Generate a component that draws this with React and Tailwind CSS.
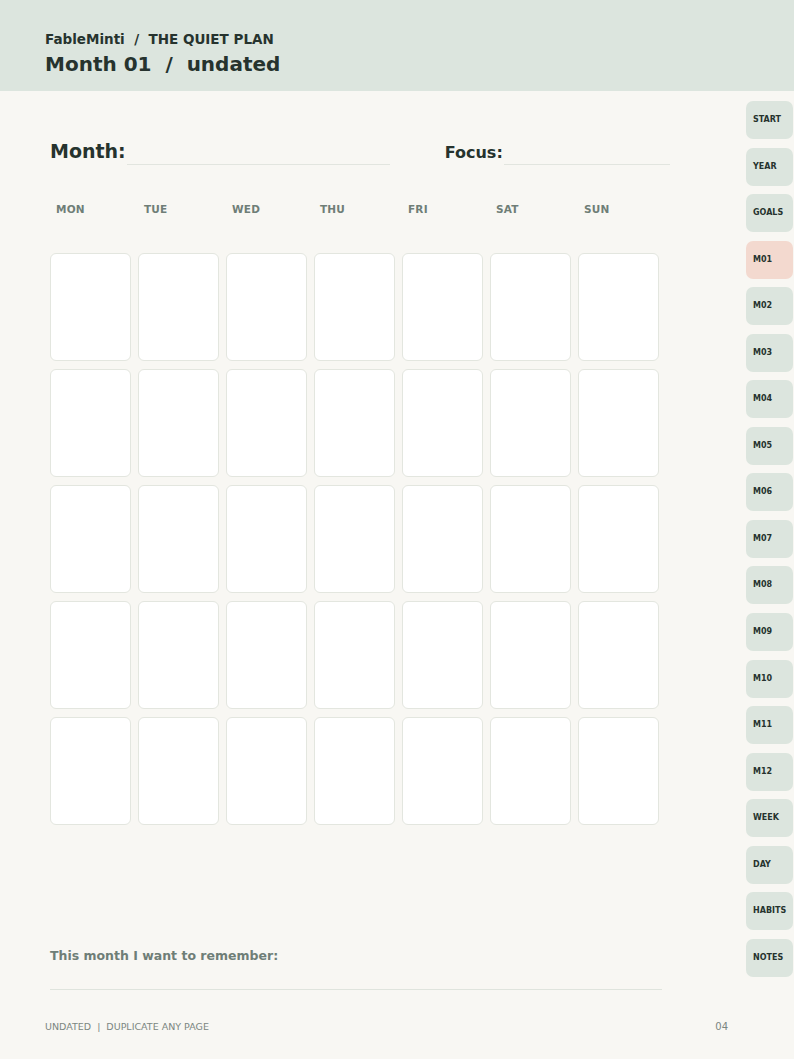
import React from 'react';

const DAYS = ['MON', 'TUE', 'WED', 'THU', 'FRI', 'SAT', 'SUN'];
const TABS = ['START', 'YEAR', 'GOALS', 'M01', 'M02', 'M03', 'M04', 'M05', 'M06', 'M07', 'M08', 'M09', 'M10', 'M11', 'M12', 'WEEK', 'DAY', 'HABITS', 'NOTES'];

export default function App() {
  return (
    <div
      className="w-[794px] h-[1059px] bg-[#f8f7f3] text-[#26332e] flex flex-col overflow-hidden"
      style={{ fontFamily: '"DejaVu Sans", Verdana, sans-serif' }}
    >
      {/* Header */}
      <div className="h-[91px] bg-[#dce5de] pl-[45px] pt-[30px] flex flex-col">
        <div className="text-[13.5px] leading-[18px] font-bold">FableMinti&nbsp; /&nbsp; THE QUIET PLAN</div>
        <div className="text-[20px] leading-[26px] font-bold mt-[3px]">Month 01&nbsp; /&nbsp; undated</div>
      </div>

      <div className="flex flex-1">
        {/* Main */}
        <div className="w-[746px] pl-[50px] flex flex-col">
          <div className="mt-[48px] h-[26px] flex items-end">
            <span className="text-[19px] leading-[24px] font-bold mb-[2px]">Month:</span>
            <div className="w-[263px] ml-[1px] border-b border-[#e2e5df]" />
            <span className="ml-[55px] text-[16px] leading-[20px] font-bold mb-[2px]">Focus:</span>
            <div className="w-[166px] ml-[1px] border-b border-[#e2e5df]" />
          </div>

          <div className="mt-[38px] grid grid-cols-[repeat(7,81px)] gap-x-[7px]">
            {DAYS.map(d => (
              <div key={d} className="pl-[6px] text-[10.5px] leading-[13px] font-bold text-[#6f7e77] tracking-[0.2px]">{d}</div>
            ))}
          </div>

          <div className="mt-[37px] grid grid-cols-[repeat(7,81px)] grid-rows-[repeat(5,108px)] gap-x-[7px] gap-y-[8px]">
            {Array.from({ length: 35 }).map((_, i) => (
              <div key={i} className="bg-white border border-[#e3e6df] rounded-[6px]" />
            ))}
          </div>

          <div className="mt-[123px] text-[12.5px] leading-[16px] font-bold text-[#6f7e77]">This month I want to remember:</div>
          <div className="mt-[25px] w-[612px] border-b border-[#dfe4dd]" />

          <div className="mt-[31px] -ml-[5px] pr-[18px] flex justify-between text-[9.5px] leading-[12px] text-[#7b8681]">
            <span>UNDATED&nbsp; |&nbsp; DUPLICATE ANY PAGE</span>
            <span className="text-[10px]">04</span>
          </div>
        </div>

        {/* Tabs */}
        <div className="w-[48px] pt-[10px] flex flex-col gap-[8.55px]">
          {TABS.map(t => (
            <div
              key={t}
              className={`w-[47px] h-[38px] rounded-[7px] pl-[7px] flex items-center text-[8px] font-bold text-[#26332e] ${t === 'M01' ? 'bg-[#f3d9cf]' : 'bg-[#dce5de]'}`}
            >
              {t}
            </div>
          ))}
        </div>
      </div>
    </div>
  );
}
